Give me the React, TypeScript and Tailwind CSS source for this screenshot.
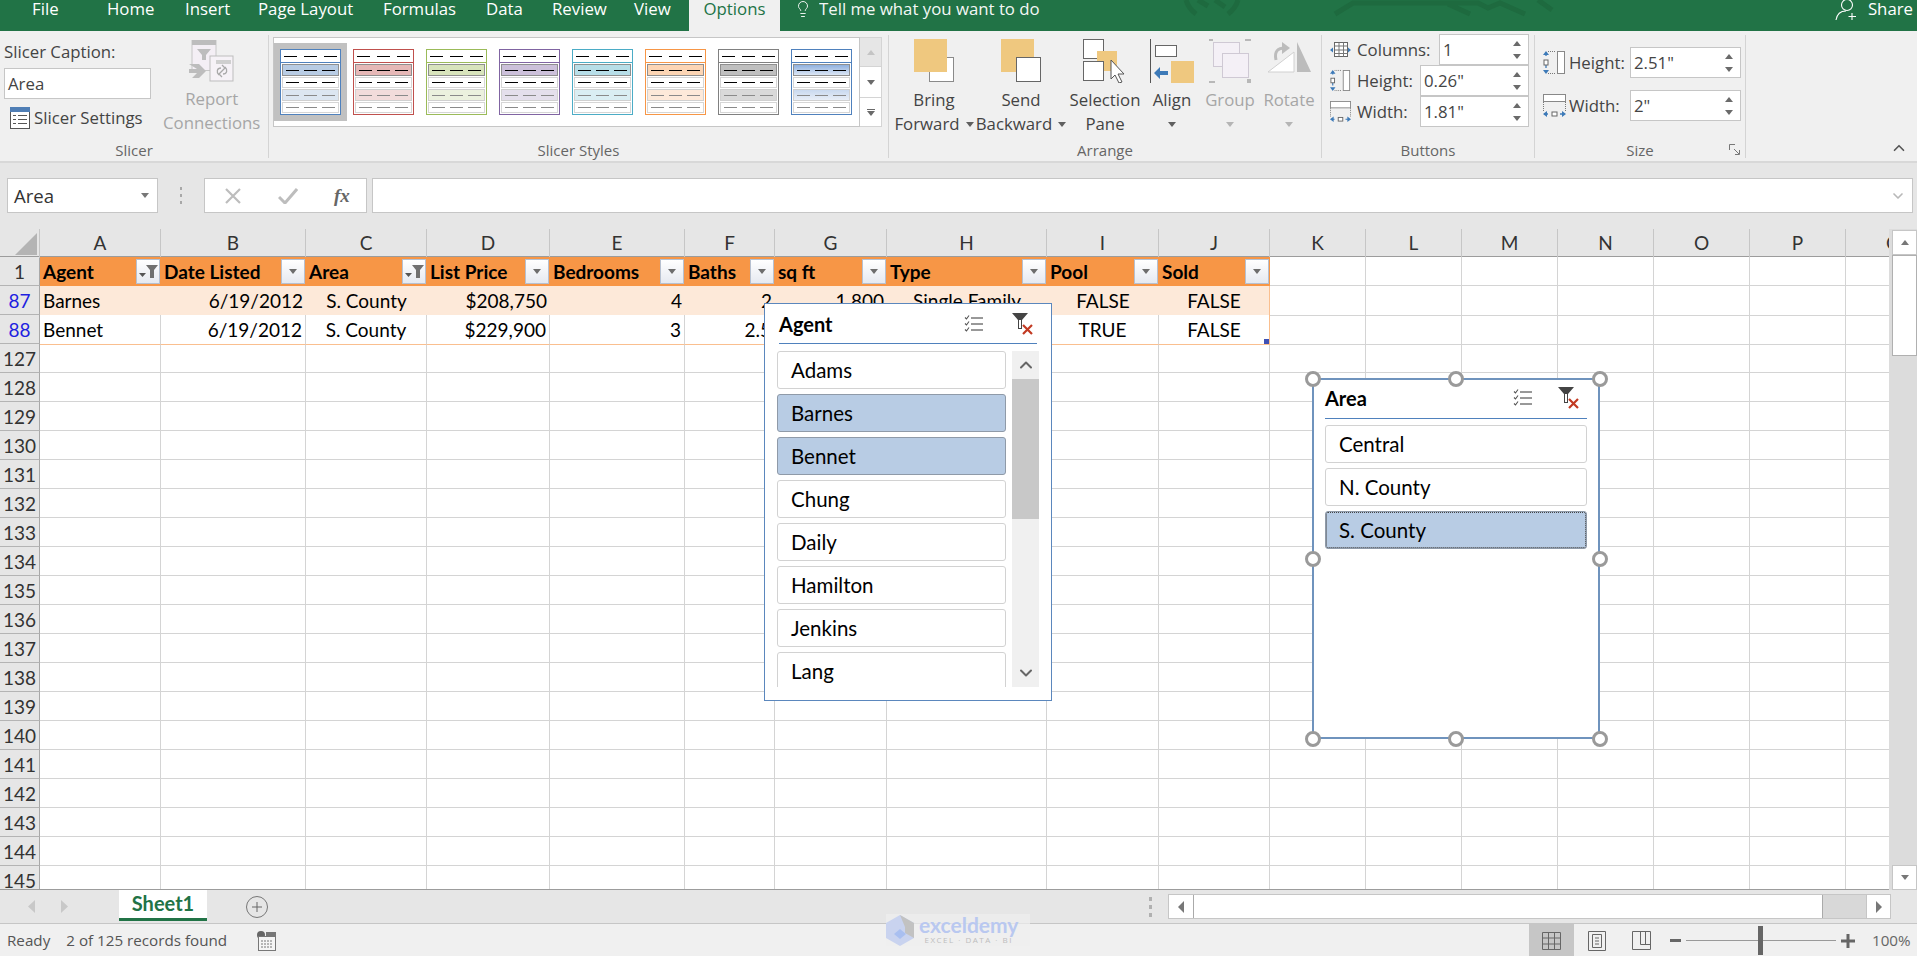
import React from "react";
import { ChevronUp, ChevronDown, Lightbulb } from "lucide-react";

const cellFont = "font-['Lato','Liberation_Sans',sans-serif]";
const gridCols =
  "grid grid-cols-[40px_121px_145px_121px_123px_135px_90px_112px_160px_112px_111px_96px_96px_96px_96px_96px_96px_96px]";

const tabs = [
  { label: "File", cls: "w-[107px] pl-[32px]" },
  { label: "Home", cls: "w-[78px]" },
  { label: "Insert", cls: "w-[73px]" },
  { label: "Page Layout", cls: "w-[125px]" },
  { label: "Formulas", cls: "w-[103px]" },
  { label: "Data", cls: "w-[66px]" },
  { label: "Review", cls: "w-[82px]" },
  { label: "View", cls: "w-[55px]" },
];

function Caret({ className = "fill-[#5f5f5f]" }: { className?: string }) {
  return (
    <svg width="8" height="5" viewBox="0 0 8 5" className={className}>
      <path d="M0 0h8L4 5z" />
    </svg>
  );
}

function TabBar() {
  return (
    <div className="relative h-[31px] shrink-0 bg-[#217346] flex text-[16.8px] text-white overflow-hidden">
      <svg width="1917" height="31" className="absolute left-0 top-0" fill="none" stroke="#1e6a3f" strokeWidth="5">
        <path d="M1186 0c2 7 6 11 10 14M1238 0c-2 7-6 11-10 14M1198 0l10 6M1215 0l10 7" />
        <path d="M1335 14l18-11h125l10 5 12-5 25 11M1448 4l22 10M1538 0l14 10" />
      </svg>
      {tabs.map((t) => (
        <div key={t.label} className={`${t.cls} relative h-[31px] leading-[18px] whitespace-nowrap`}>
          {t.label}
        </div>
      ))}
      <div className="relative w-[91px] h-[31px] bg-[#f0f0f0] text-[#217346] text-center leading-[18px]">Options</div>
      <div className="relative ml-[16px] flex items-start">
        <Lightbulb size={18} strokeWidth={1.2} className="-ml-[2px]" />
        <span className="ml-[7px] leading-[18px] opacity-95 whitespace-nowrap">Tell me what you want to do</span>
      </div>
      <div className="relative ml-auto mr-[4px] flex items-start">
        <svg width="24" height="21" viewBox="0 0 24 21" fill="none" stroke="#fff" strokeWidth="1.1" className="mr-[9px]">
          <circle cx="12" cy="5" r="5.5" />
          <path d="M1 20c1-6 5-9 10-9M17 13v7M13.5 16.5h7.5" />
        </svg>
        <span className="leading-[18px]">Share</span>
      </div>
    </div>
  );
}

const swatches = [
  { border: "border-[#4f81bd]", dark: "bg-[#b8cce4]", light: "bg-[#dce6f1]" },
  { border: "border-[#c0504d]", dark: "bg-[#e6b8b7]", light: "bg-[#f2dcdb]" },
  { border: "border-[#9bbb59]", dark: "bg-[#d8e4bc]", light: "bg-[#ebf1de]" },
  { border: "border-[#8064a2]", dark: "bg-[#ccc0da]", light: "bg-[#e4dfec]" },
  { border: "border-[#4bacc6]", dark: "bg-[#b7dee8]", light: "bg-[#daeef3]" },
  { border: "border-[#f79646]", dark: "bg-[#fcd5b4]", light: "bg-[#fde9d9]" },
  { border: "border-[#808080]", dark: "bg-[#bfbfbf]", light: "bg-[#d9d9d9]" },
  { border: "border-[#4f81bd]", dark: "bg-linear-to-b from-[#8fb0de] to-[#dce6f4]", light: "bg-linear-to-b from-[#c9d9ef] to-[#e8eef7]" },
];

function Dashes({ gray }: { gray?: boolean }) {
  const c = gray ? "bg-[#8a8a8a]" : "bg-black";
  return (
    <div className="h-full flex items-center justify-between px-[3px]">
      <span className={`h-px w-[13px] ${c}`} />
      <span className={`h-px w-[13px] ${c}`} />
      <span className={`h-px w-[13px] ${c}`} />
    </div>
  );
}

function Swatch({ border, dark, light }: { border: string; dark: string; light: string }) {
  return (
    <div className={`w-[61px] h-[66px] border ${border} bg-white flex flex-col`}>
      <div className={`h-[13px] shrink-0 border-b ${border}`}>
        <Dashes />
      </div>
      <div className="flex-1 flex flex-col gap-px p-px">
        <div className={`h-[12px] border border-[#8f8f8f] ${dark}`}>
          <Dashes />
        </div>
        <div className="h-[11px] border border-[#d6d6d6]">
          <Dashes />
        </div>
        <div className={`h-[12px] border border-[#d0d0d0] ${light}`}>
          <Dashes gray />
        </div>
        <div className="h-[11px] border border-[#d6d6d6]">
          <Dashes gray />
        </div>
      </div>
    </div>
  );
}

function SpinInput({ value, className }: { value: string; className: string }) {
  return (
    <div className={`${className} bg-white border border-[#c6c6c6] flex items-center justify-between pl-[3px] pr-[7px] text-[#444]`}>
      <span>{value}</span>
      <div className="flex flex-col gap-[8px]">
        <Caret className="fill-[#6a6a6a] rotate-180" />
        <Caret className="fill-[#6a6a6a]" />
      </div>
    </div>
  );
}

function ColumnsIcon() {
  return (
    <svg width="21" height="16" viewBox="0 0 21 16" fill="none">
      <rect x="4.5" y="0.5" width="13" height="14" fill="#fff" stroke="#666" />
      <path d="M4.5 4h13M4.5 8h13M4.5 11.5h13M9 .5v14M13.5 .5v14" stroke="#777" />
      <path d="M0 8l3-2.5v5zM21 8l-3-2.5v5z" fill="#3d7ab8" />
    </svg>
  );
}

function HeightIcon() {
  return (
    <svg width="23" height="23" viewBox="0 0 23 23" fill="none">
      <path d="M3 1v21" stroke="#3d7ab8" strokeDasharray="4 8" strokeWidth="1.3" />
      <path d="M3 0l3 4H0zM3 23l3-4H0z" fill="#3d7ab8" />
      <rect x="1" y="9" width="4" height="5" fill="#fff" stroke="#666" />
      <rect x="14.5" y="0.5" width="7" height="22" fill="#fff" stroke="#888" />
      <path d="M5 .5h8M5 22.5h8" stroke="#777" strokeDasharray="1 1" />
    </svg>
  );
}

function WidthIcon() {
  return (
    <svg width="23" height="23" viewBox="0 0 23 23" fill="none">
      <rect x="0.5" y="0.5" width="22" height="7" fill="#fff" stroke="#888" />
      <path d="M.5 8v9M22.5 8v9" stroke="#777" strokeDasharray="1 1" />
      <path d="M1 20h21" stroke="#3d7ab8" strokeWidth="1.3" strokeDasharray="4 12" />
      <path d="M0 20l4-3v6zM23 20l-4-3v6z" fill="#3d7ab8" />
      <rect x="9" y="18" width="5" height="4" fill="#fff" stroke="#666" />
    </svg>
  );
}

function GroupLabel({ children }: { children: React.ReactNode }) {
  return <div className="h-[16px] leading-[16px] text-center text-[#666] text-[15px] shrink-0">{children}</div>;
}

function BigButton({
  w,
  icon,
  top,
  bottom,
  caret,
  muted,
}: {
  w: string;
  icon: React.ReactNode;
  top: string;
  bottom?: string;
  caret?: boolean;
  muted?: boolean;
}) {
  return (
    <div className={`${w} flex flex-col items-center leading-[24px] ${muted ? "text-[#a6a6a6]" : "text-[#444]"}`}>
      <div className="h-[44px] mt-[4px] mb-[5px]">{icon}</div>
      <div>{top}</div>
      <div className="h-[24px] flex items-center gap-[6px] whitespace-nowrap">
        {bottom}
        {caret && <Caret className={muted ? "fill-[#b5b5b5]" : "fill-[#5f5f5f]"} />}
      </div>
    </div>
  );
}

function Ribbon() {
  return (
    <div className="h-[132px] shrink-0 bg-[#f0f0f0] border-b-2 border-[#d8d8d8] flex text-[16.8px] text-[#444]">
      {/* Slicer */}
      <div className="w-[269px] h-[123px] mt-[4px] border-r border-[#d4d4d4] flex flex-col">
        <div className="flex-1 flex">
          <div className="w-[156px] pl-[4px] flex flex-col">
            <div className="h-[20px] leading-[20px] mt-[7px] whitespace-nowrap">Slicer Caption:</div>
            <div className="h-[31px] w-[147px] mt-[6px] bg-white border border-[#c6c6c6] pl-[3px] leading-[29px]">Area</div>
            <div className="flex items-center h-[22px] mt-[8px] pl-[6px]">
              <svg width="20" height="22" viewBox="0 0 20 22" fill="none" className="shrink-0">
                <rect x="0.5" y="0.5" width="19" height="21" fill="#fff" stroke="#555" />
                <rect x="0" y="0" width="20" height="5" fill="#4f7eb5" />
                <path d="M3 8.5h3M8 8.5h9M3 12.5h3M8 12.5h9M3 16.5h3M8 16.5h9" stroke="#555" />
              </svg>
              <span className="ml-[4px] whitespace-nowrap">Slicer Settings</span>
            </div>
          </div>
          <div className="w-[113px] flex flex-col items-center text-[#a6a6a6] leading-[24px]">
            <svg width="46" height="42" viewBox="0 0 46 42" fill="none" className="mt-[5px] mb-[5px]">
              <rect x="3" y="0.5" width="24" height="30" fill="#f4eff5" stroke="#c6c6c6" />
              <rect x="3" y="0" width="24" height="5" fill="#bdbdbd" />
              <path d="M8 9h14l-5 6v5h-4v-5z" fill="#bdbdbd" />
              <rect x="21" y="16" width="23" height="25" fill="#f6f2f7" stroke="#bdbdbd" />
              <rect x="27" y="20" width="15" height="4" fill="#cfcfcf" />
              <path d="M0 24h10l7 7-7 7H3l5-5H0v-4h8z" fill="#bdbdbd" />
              <path d="M30 35c-3-3-2-7 2-7M33 25l3 3-3 3M36 27c3 3 2 7-2 7M33 37l-3-3 3-3" stroke="#a9a9a9" strokeWidth="1.3" />
            </svg>
            <div>Report</div>
            <div>Connections</div>
          </div>
        </div>
        <GroupLabel>Slicer</GroupLabel>
      </div>

      {/* Slicer Styles */}
      <div className="w-[620px] h-[123px] mt-[4px] border-r border-[#d4d4d4] flex flex-col">
        <div className="flex-1 flex pl-[4px] pt-[2px]">
          <div className="w-[587px] h-[90px] bg-white border border-[#c6c6c6] flex items-center">
            {swatches.map((s, i) => (
              <div key={i} className={`w-[73px] h-[78px] flex items-center justify-center ${i === 0 ? "bg-[#c1c1c1]" : ""}`}>
                <Swatch {...s} />
              </div>
            ))}
          </div>
          <div className="w-[22px] h-[90px] flex flex-col">
            <div className="h-[30px] bg-[#e6e6e6] border border-l-0 border-[#d4d4d4] flex items-center justify-center">
              <Caret className="fill-[#c4c4c4] rotate-180" />
            </div>
            <div className="h-[30px] bg-white border border-y-0 border-l-0 border-[#d4d4d4] flex items-center justify-center">
              <Caret className="fill-[#6a6a6a]" />
            </div>
            <div className="h-[30px] bg-white border border-l-0 border-[#d4d4d4] flex flex-col items-center justify-center gap-px">
              <span className="h-px w-[8px] bg-[#6a6a6a]" />
              <Caret className="fill-[#6a6a6a]" />
            </div>
          </div>
        </div>
        <GroupLabel>Slicer Styles</GroupLabel>
      </div>

      {/* Arrange */}
      <div className="w-[433px] h-[123px] mt-[4px] border-r border-[#d4d4d4] flex flex-col">
        <div className="flex-1 flex pl-[5px]">
          <BigButton
            w="w-[80px]"
            top="Bring"
            bottom="Forward"
            caret
            icon={
              <svg width="40" height="44" viewBox="0 0 40 44">
                <rect x="15.5" y="18.5" width="24" height="24" fill="#fff" stroke="#8a8a8a" />
                <rect x="0" y="0" width="33" height="33" fill="#efc87f" />
              </svg>
            }
          />
          <BigButton
            w="w-[94px]"
            top="Send"
            bottom="Backward"
            caret
            icon={
              <svg width="40" height="44" viewBox="0 0 40 44">
                <rect x="0" y="0" width="33" height="33" fill="#efc87f" />
                <rect x="15.5" y="18.5" width="24" height="24" fill="#fff" stroke="#666" />
              </svg>
            }
          />
          <BigButton
            w="w-[74px]"
            top="Selection"
            bottom="Pane"
            icon={
              <svg width="44" height="44" viewBox="0 0 44 44">
                <rect x="0.5" y="0.5" width="20" height="19" fill="#fff" stroke="#666" />
                <rect x="14" y="12" width="20" height="20" fill="#efc87f" />
                <rect x="0.5" y="22.5" width="20" height="19" fill="#fff" stroke="#666" />
                <path d="M28 21v19l4-4 4 8 3-1-4-8h6z" fill="#fff" stroke="#555" />
              </svg>
            }
          />
          <BigButton
            w="w-[60px]"
            top="Align"
            caret
            icon={
              <svg width="44" height="44" viewBox="0 0 44 44">
                <path d="M.5 0v44" stroke="#555" />
                <rect x="5.5" y="6.5" width="21" height="11" fill="#fff" stroke="#666" />
                <rect x="21" y="22" width="23" height="22" fill="#efc87f" />
                <path d="M4 34l6-6v4h8v4h-8v4z" fill="#3d7ab8" />
              </svg>
            }
          />
          <BigButton
            w="w-[56px]"
            top="Group"
            caret
            muted
            icon={
              <svg width="42" height="44" viewBox="0 0 42 44">
                <rect x="4.5" y="3.5" width="26" height="24" fill="#f4f0f6" stroke="#cfc9d4" />
                <rect x="13.5" y="14.5" width="26" height="24" fill="#f4f0f6" stroke="#cfc9d4" />
                <path d="M0 2h4v-2H0zM36 2h6v-2h-6zM0 44h6v-2H0zM38 44h4v-4h-4z" fill="#b8b8b8" />
              </svg>
            }
          />
          <BigButton
            w="w-[62px]"
            top="Rotate"
            caret
            muted
            icon={
              <svg width="44" height="44" viewBox="0 0 44 44">
                <path d="M30 3l14 30H30z" fill="#bcbcbc" />
                <path d="M1 33l26-20v20z" fill="#fff" stroke="#d0d0d0" />
                <path d="M9 21c-2-9 2-12 9-12" fill="none" stroke="#bcbcbc" strokeWidth="3" />
                <path d="M15 3l8 6-8 6z" fill="#bcbcbc" />
              </svg>
            }
          />
        </div>
        <GroupLabel>Arrange</GroupLabel>
      </div>

      {/* Buttons */}
      <div className="w-[213px] h-[123px] mt-[4px] border-r border-[#d4d4d4] flex flex-col">
        <div className="flex-1 flex flex-col -mt-[1px] pl-[8px] pr-[5px]">
          <div className="flex items-center h-[31px]">
            <div className="w-[21px] flex justify-center"><ColumnsIcon /></div>
            <span className="ml-[6px]">Columns:</span>
            <SpinInput value="1" className="ml-auto w-[90px] h-[31px]" />
          </div>
          <div className="flex items-center h-[31px]">
            <div className="w-[21px] flex justify-center"><HeightIcon /></div>
            <span className="ml-[6px]">Height:</span>
            <SpinInput value={'0.26"'} className="ml-auto w-[109px] h-[31px]" />
          </div>
          <div className="flex items-center h-[31px]">
            <div className="w-[21px] flex justify-center"><WidthIcon /></div>
            <span className="ml-[6px]">Width:</span>
            <SpinInput value={'1.81"'} className="ml-auto w-[109px] h-[31px]" />
          </div>
        </div>
        <GroupLabel>Buttons</GroupLabel>
      </div>

      {/* Size */}
      <div className="w-[211px] h-[123px] mt-[4px] border-r border-[#d4d4d4] flex flex-col">
        <div className="flex-1 flex flex-col pt-[12px] pl-[8px] pr-[4px] gap-[12px]">
          <div className="flex items-center h-[31px]">
            <HeightIcon />
            <span className="ml-[3px]">Height:</span>
            <SpinInput value={'2.51"'} className="ml-auto w-[111px] h-[31px]" />
          </div>
          <div className="flex items-center h-[31px]">
            <WidthIcon />
            <span className="ml-[3px]">Width:</span>
            <SpinInput value={'2"'} className="ml-auto w-[111px] h-[31px]" />
          </div>
        </div>
        <div className="relative">
          <GroupLabel>Size</GroupLabel>
          <svg width="11" height="11" viewBox="0 0 11 11" fill="none" stroke="#777" className="absolute right-[5px] top-[2px]">
            <path d="M.5 6V.5H6M5 5l5 5M6 10.5h4.5V6" />
          </svg>
        </div>
      </div>

      <div className="flex-1 flex justify-end items-end pb-[4px] pr-[9px]">
        <ChevronUp size={18} strokeWidth={2.2} className="text-[#555]" />
      </div>
    </div>
  );
}

function FormulaBar() {
  return (
    <div className="h-[66px] shrink-0 bg-[#e6e6e6] flex pt-[15px] pl-[7px] text-[#333] text-[18.6px]">
      <div className="w-[151px] h-[35px] bg-white border border-[#c6c6c6] flex items-center justify-between pl-[6px] pr-[8px]">
        <span>Area</span>
        <Caret className="fill-[#777]" />
      </div>
      <div className="w-[46px] h-[35px] flex flex-col items-center justify-center gap-[4px]">
        <span className="w-[2px] h-[3px] bg-[#a8a8a8]" />
        <span className="w-[2px] h-[3px] bg-[#a8a8a8]" />
        <span className="w-[2px] h-[3px] bg-[#a8a8a8]" />
      </div>
      <div className="w-[163px] h-[35px] bg-white border border-[#c6c6c6] flex items-center">
        <svg width="18" height="16" viewBox="0 0 18 16" className="ml-[19px]" stroke="#bdbdbd" strokeWidth="2.2" fill="none">
          <path d="M2 1l14 14M16 1L2 15" />
        </svg>
        <svg width="20" height="16" viewBox="0 0 20 16" className="ml-[36px]" stroke="#bdbdbd" strokeWidth="3" fill="none">
          <path d="M1 9l6 6L19 1" />
        </svg>
        <span className="ml-[36px] text-[#666] italic font-bold text-[19px] leading-none font-['Liberation_Serif',serif]">fx</span>
      </div>
      <div className="ml-[5px] w-[1541px] h-[35px] bg-white border border-[#c6c6c6] flex items-center justify-end pr-[6px]">
        <ChevronDown size={16} strokeWidth={2.5} className="text-[#b8b8b8]" />
      </div>
    </div>
  );
}

function FunnelMark() {
  return (
    <svg width="12" height="13" viewBox="0 0 12 13" className="fill-[#707070]">
      <path d="M0 0h12L8 5v8H4V5z" />
    </svg>
  );
}

function FilterBtn({ active }: { active?: boolean }) {
  return (
    <div className="absolute right-px top-[2px] w-[24px] h-[25px] border border-[#b6c0d0] bg-linear-to-b from-white to-[#e6e9f0] flex items-center justify-center gap-0">
      {active ? (
        <>
          <svg width="7" height="4" viewBox="0 0 7 4" className="fill-[#555] mt-[7px]"><path d="M0 0h7L3.5 4z" /></svg>
          <FunnelMark />
        </>
      ) : (
        <Caret className="fill-[#6d6d6d]" />
      )}
    </div>
  );
}

const headerCols = ["A", "B", "C", "D", "E", "F", "G", "H", "I", "J", "K", "L", "M", "N", "O", "P", "Q"];
const filterCols = [
  { label: "Agent", active: true },
  { label: "Date Listed" },
  { label: "Area", active: true },
  { label: "List Price" },
  { label: "Bedrooms" },
  { label: "Baths" },
  { label: "sq ft" },
  { label: "Type" },
  { label: "Pool" },
  { label: "Sold" },
];

const dataRows = [
  { num: "87", bg: "bg-[#fde9d9]", line: "border-b-[#c4d79b]", cells: ["Barnes", "6/19/2012", "S. County", "$208,750", "4", "2", "1,800", "Single Family", "FALSE", "FALSE"] },
  { num: "88", bg: "bg-white", line: "border-b-[#fabf8f]", cells: ["Bennet", "6/19/2012", "S. County", "$229,900", "3", "2.5", "", "", "TRUE", "FALSE"] },
];
const alignByCol = [
  "text-left pl-[3px]",
  "text-right pr-[3px]",
  "text-center",
  "text-right pr-[3px]",
  "text-right pr-[3px]",
  "text-right pr-[3px]",
  "text-right pr-[3px]",
  "text-center",
  "text-center",
  "text-center",
];

const emptyRows = Array.from({ length: 19 }, (_, i) => String(127 + i));
const extraCols = Array.from({ length: 7 }, (_, i) => i);
const allCols = Array.from({ length: 17 }, (_, i) => i);

function RowHead({ children, blue }: { children: React.ReactNode; blue?: boolean }) {
  return (
    <div className={`h-[29px] bg-[#e6e6e6] border-r border-r-[#a8a8a8] border-b border-b-[#b4b4b4] flex items-center justify-center pt-px leading-none ${blue ? "text-[#1f1fe0]" : "text-[#333]"}`}>
      {children}
    </div>
  );
}

function Sheet() {
  return (
    <div className="flex h-[661px] shrink-0">
      <div className={`w-[1889px] h-[661px] overflow-hidden bg-white border-b border-[#9c9c9c] text-[19px] text-black ${cellFont}`}>
        <div className={`${gridCols} h-[28px] bg-[#e6e6e6] border-b border-[#9c9c9c]`}>
          <div className="relative border-r border-[#c6c6c6]">
            <svg width="23" height="22" className="absolute left-[15px] top-[4px] fill-[#b4b4b4]"><path d="M22 0v22H0z" /></svg>
          </div>
          {headerCols.map((c) => (
            <div key={c} className="border-r border-[#c6c6c6] flex items-center justify-center text-[#333]">{c}</div>
          ))}
        </div>
        <div className={`${gridCols} h-[29px]`}>
          <RowHead>1</RowHead>
          {filterCols.map((c) => (
            <div key={c.label} className="relative bg-[#f79646] font-bold pl-[3px] leading-[29px] whitespace-nowrap">
              {c.label}
              <FilterBtn active={c.active} />
            </div>
          ))}
          {extraCols.map((i) => (
            <div key={i} className="border-r border-b border-[#d4d4d4]" />
          ))}
        </div>
        {dataRows.map((r) => (
          <div key={r.num} className={`${gridCols} h-[29px]`}>
            <RowHead blue>{r.num}</RowHead>
            {r.cells.map((v, i) => (
              <div
                key={i}
                className={`relative ${r.bg} ${alignByCol[i]} border-b ${r.line} ${i === 9 ? "border-r border-r-[#fabf8f]" : r.num === "88" ? "border-r border-r-[#d4d4d4]" : ""} leading-[29px] whitespace-nowrap`}
              >
                {v}
                {r.num === "88" && i === 9 && <span className="absolute right-0 bottom-0 w-[5px] h-[5px] bg-[#3f51b5]" />}
              </div>
            ))}
            {extraCols.map((i) => (
              <div key={i} className="border-r border-b border-[#d4d4d4]" />
            ))}
          </div>
        ))}
        {emptyRows.map((n) => (
          <div key={n} className={`${gridCols} h-[29px]`}>
            <RowHead>{n}</RowHead>
            {allCols.map((i) => (
              <div key={i} className="border-r border-b border-[#d4d4d4]" />
            ))}
          </div>
        ))}
      </div>
      <div className="w-[28px] h-[661px] bg-[#dcdcdc] pl-[3px] pt-[1px] flex flex-col">
        <div className="h-[25px] bg-white border border-[#c6c6c6] flex items-center justify-center">
          <Caret className="fill-[#777] rotate-180" />
        </div>
        <div className="h-[101px] bg-white border border-[#b0b0b0]" />
        <div className="h-[25px] mt-auto bg-white border border-[#c6c6c6] flex items-center justify-center">
          <Caret className="fill-[#777]" />
        </div>
      </div>
    </div>
  );
}

function SheetBar() {
  return (
    <div className="h-[34px] shrink-0 bg-[#e6e6e6] border-b border-[#c6c6c6] flex text-[#666]">
      <div className="w-[119px] flex items-center pl-[28px] gap-[26px]">
        <svg width="7" height="13"><path d="M7 0v13L0 6.5z" fill="#c8c8c8" /></svg>
        <svg width="7" height="13"><path d="M0 0v13l7-6.5z" fill="#c8c8c8" /></svg>
      </div>
      <div className={`w-[88px] h-[31px] bg-white border-b-[3px] border-[#217346] text-center text-[#217346] font-bold text-[20px] leading-[27px] ${cellFont}`}>Sheet1</div>
      <div className="ml-[39px] mt-[6px] w-[22px] h-[22px] rounded-full border border-[#777] flex items-center justify-center">
        <svg width="12" height="12" stroke="#666"><path d="M6 1v10M1 6h10" /></svg>
      </div>
      <div className="ml-auto mr-[26px] flex items-center gap-[16px]">
        <div className="flex flex-col gap-[4px]">
          <span className="w-[3px] h-[4px] bg-[#b0b0b0]" />
          <span className="w-[3px] h-[4px] bg-[#b0b0b0]" />
          <span className="w-[3px] h-[4px] bg-[#b0b0b0]" />
        </div>
        <div className="w-[723px] h-[25px] flex border border-[#c6c6c6]">
          <div className="w-[24px] bg-white flex items-center justify-center">
            <svg width="6" height="12"><path d="M6 0v12L0 6z" fill="#777" /></svg>
          </div>
          <div className="w-[630px] bg-white border-x border-[#aaa]" />
          <div className="flex-1 bg-[#d8d8d8]" />
          <div className="w-[24px] bg-white border-l border-[#c6c6c6] flex items-center justify-center">
            <svg width="6" height="12"><path d="M0 0v12l6-6z" fill="#777" /></svg>
          </div>
        </div>
      </div>
    </div>
  );
}

function StatusBar() {
  return (
    <div className="h-[33px] shrink-0 bg-[#f0f0f0] flex items-center text-[15.2px] text-[#555]">
      <span className="ml-[7px]">Ready</span>
      <span className="ml-[16px]">2 of 125 records found</span>
      <svg width="20" height="20" viewBox="0 0 20 20" fill="none" className="ml-[29px]">
        <circle cx="5" cy="4" r="4" fill="#666" />
        <rect x="2.5" y="5.5" width="17" height="14" fill="#f5f5f5" stroke="#777" />
        <rect x="10" y="1" width="10" height="5" fill="#777" />
        <path d="M5 10h12M5 13h12M5 16h12" stroke="#777" strokeDasharray="2 1" />
      </svg>
      <div className="ml-auto flex h-[33px] items-center">
        <div className="w-[45px] h-[33px] bg-[#c6c6c6] flex items-center justify-center">
          <svg width="19" height="18" fill="none" stroke="#666"><path d="M.5.5h18v17H.5zM.5 6h18M.5 12h18M6.5.5v17M12.5.5v17" /></svg>
        </div>
        <div className="w-[45px] flex justify-center">
          <svg width="18" height="20" fill="none" stroke="#666"><path d="M.5.5h17v19H.5zM4.5 3.5h9v13h-9zM7 7h4M7 10h4M7 13h4" /></svg>
        </div>
        <div className="w-[45px] flex justify-center">
          <svg width="19" height="19" fill="none" stroke="#666"><path d="M.5.5h18v18H.5zM8.5.5v13h10M13.5.5v13" /></svg>
        </div>
        <div className="ml-[6px] w-[11px] h-[3px] bg-[#666]" />
        <div className="relative ml-[5px] w-[150px] h-px bg-[#999]">
          <div className="absolute left-[72px] -top-[14px] w-[5px] h-[29px] bg-[#666]" />
        </div>
        <svg width="14" height="14" className="ml-[5px]" stroke="#666" strokeWidth="3"><path d="M7 0v14M0 7h14" /></svg>
        <span className="ml-[17px] mr-[5px] w-[40px] text-[#666] whitespace-nowrap">100%</span>
      </div>
    </div>
  );
}

function ListIcon() {
  return (
    <svg width="19" height="18" viewBox="0 0 19 18" fill="none">
      <path d="M1 2.5l1.5 1.5L5 .5M1 8.5l1.5 1.5L5 6.5M1 14.5l1.5 1.5L5 12.5" stroke="#555" strokeWidth="1.1" />
      <path d="M7 3h12M7 9h12M7 15h12" stroke="#333" />
    </svg>
  );
}

function ClearFilterIcon() {
  return (
    <svg width="22" height="22" viewBox="0 0 22 22" fill="none">
      <path d="M0 0h16l-6 7v9H6V7z" fill="#444" />
      <path d="M7 7h2v8H7z" fill="#fff" />
      <path d="M11 12l9 9M20 12l-9 9" stroke="#c23a22" strokeWidth="2.2" />
    </svg>
  );
}

function SlicerItem({ label, on, focus }: { label: string; on?: boolean; focus?: boolean }) {
  return (
    <div
      className={`h-[38px] shrink-0 rounded-[3px] border pl-[13px] flex items-center text-black ${
        on ? "bg-[#b8cce4] border-[#8f9aa8]" : "bg-white border-[#d2d2d2]"
      } ${focus ? "outline-1 outline-dotted outline-[#444] -outline-offset-2" : ""}`}
    >
      {label}
    </div>
  );
}

const agents = [
  { n: "Adams" },
  { n: "Barnes", on: true },
  { n: "Bennet", on: true },
  { n: "Chung" },
  { n: "Daily" },
  { n: "Hamilton" },
  { n: "Jenkins" },
  { n: "Lang" },
];

function AgentSlicer() {
  return (
    <div className={`absolute left-[764px] top-[303px] w-[288px] h-[398px] bg-white border border-[#5b87bd] text-[20.5px] ${cellFont}`}>
      <div className="mx-[14px] h-[40px] border-b border-[#4f81bd] flex items-center">
        <span className="font-bold text-[20px] text-black">Agent</span>
        <div className="ml-auto mr-[3px] flex items-center gap-[29px]">
          <ListIcon />
          <ClearFilterIcon />
        </div>
      </div>
      <div className="flex ml-[12px] mt-[7px]">
        <div className="w-[229px] h-[336px] overflow-hidden flex flex-col gap-[5px]">
          {agents.map((a) => (
            <SlicerItem key={a.n} label={a.n} on={a.on} />
          ))}
        </div>
        <div className="ml-[6px] w-[27px] h-[336px] bg-[#f0f0f0] flex flex-col items-center">
          <div className="h-[28px] flex items-center">
            <ChevronUp size={20} strokeWidth={2.4} className="text-[#666]" />
          </div>
          <div className="w-full h-[140px] bg-[#c8c8c8]" />
          <div className="mt-auto h-[28px] flex items-center">
            <ChevronDown size={20} strokeWidth={2.4} className="text-[#666]" />
          </div>
        </div>
      </div>
    </div>
  );
}

const handleSpots = [
  "-left-[9px] -top-[9px]",
  "left-[134px] -top-[9px]",
  "-right-[10px] -top-[9px]",
  "-left-[9px] top-[171px]",
  "-right-[10px] top-[171px]",
  "-left-[9px] -bottom-[10px]",
  "left-[134px] -bottom-[10px]",
  "-right-[10px] -bottom-[10px]",
];

function AreaSlicer() {
  return (
    <div className={`absolute left-[1312px] top-[378px] w-[288px] h-[361px] bg-white border-2 border-[#6f93bd] text-[20.5px] ${cellFont}`}>
      <div className="mx-[11px] h-[39px] pb-[2px] border-b border-[#4f81bd] flex items-center">
        <span className="font-bold text-[20px] text-black">Area</span>
        <div className="ml-auto mr-[7px] flex items-center gap-[26px]">
          <ListIcon />
          <ClearFilterIcon />
        </div>
      </div>
      <div className="mx-[11px] mt-[6px] flex flex-col gap-[5px]">
        <SlicerItem label="Central" />
        <SlicerItem label="N. County" />
        <SlicerItem label="S. County" on focus />
      </div>
      {handleSpots.map((s) => (
        <span key={s} className={`absolute ${s} w-[16px] h-[16px] rounded-full bg-white border-[3px] border-[#9a9a9a]`} />
      ))}
    </div>
  );
}

function Watermark() {
  return (
    <div className="absolute left-[886px] top-[914px] w-[144px] h-[32px] bg-[#eeeeee]/70 flex items-center">
      <svg width="28" height="31" viewBox="0 0 28 31">
        <path d="M14 0l14 8v15L14 31 0 23V8z" fill="#c9d3ef" />
        <path d="M14 0l14 8v15l-9-5v-6z" fill="#c2c2c2" />
        <path d="M14 14l6 5-6 5-6-5z" fill="#a9bff0" />
      </svg>
      <div className="ml-[5px] flex flex-col items-center">
        <span className={`text-[#b9c8f0] font-bold text-[21px] leading-[20px] ${cellFont}`}>exceldemy</span>
        <span className="text-[#bdbdbd] text-[8px] leading-[10px] tracking-[1.5px] whitespace-nowrap">EXCEL · DATA · BI</span>
      </div>
    </div>
  );
}

export default function App() {
  return (
    <div className="relative w-[1917px] h-[956px] overflow-hidden bg-white flex flex-col font-['Open_Sans','Liberation_Sans',sans-serif]">
      <TabBar />
      <Ribbon />
      <FormulaBar />
      <Sheet />
      <SheetBar />
      <StatusBar />
      <AgentSlicer />
      <AreaSlicer />
      <Watermark />
    </div>
  );
}
